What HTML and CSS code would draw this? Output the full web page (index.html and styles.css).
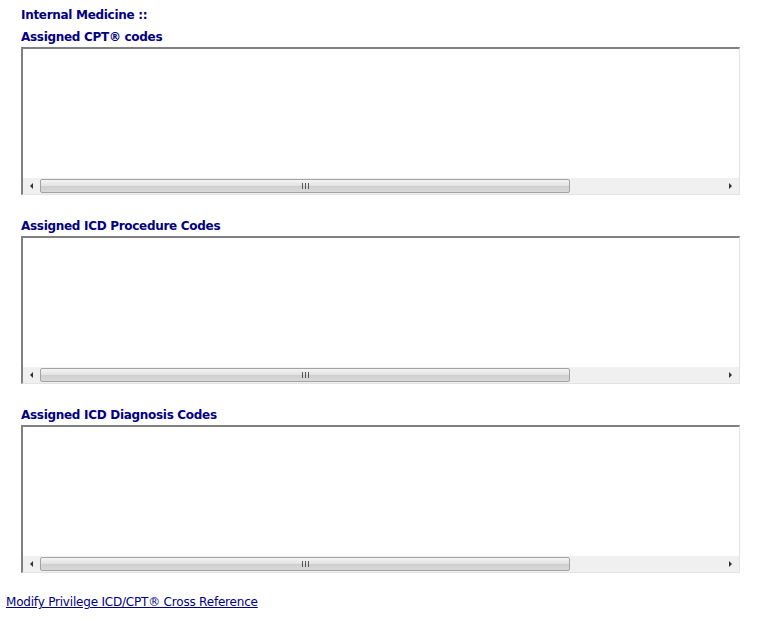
FILE: index.html
```html
<!DOCTYPE html>
<html lang="en">
<head>
  <meta charset="UTF-8" />
  <title>Privilege Codes</title>
  <link rel="stylesheet" href="styles.css">
</head>
<body>

  <div class="panel">
    <div class="specialty">Internal Medicine ::</div>

    <div class="section">
      <h2>Assigned CPT&reg; codes</h2>
      <div class="listbox">
        <div class="items"></div>
        <div class="hscroll">
          <span class="arrow left"></span>
          <div class="track"><div class="thumb"><span class="grip"></span></div></div>
          <span class="arrow right"></span>
        </div>
      </div>
    </div>

    <div class="section">
      <h2>Assigned ICD Procedure Codes</h2>
      <div class="listbox">
        <div class="items"></div>
        <div class="hscroll">
          <span class="arrow left"></span>
          <div class="track"><div class="thumb"><span class="grip"></span></div></div>
          <span class="arrow right"></span>
        </div>
      </div>
    </div>

    <div class="section">
      <h2>Assigned ICD Diagnosis Codes</h2>
      <div class="listbox">
        <div class="items"></div>
        <div class="hscroll">
          <span class="arrow left"></span>
          <div class="track"><div class="thumb"><span class="grip"></span></div></div>
          <span class="arrow right"></span>
        </div>
      </div>
    </div>
  </div>

  <a class="xref" href="#">Modify Privilege ICD/CPT&reg; Cross Reference</a>

</body>
</html>
```

FILE: styles.css
```css
* { box-sizing: border-box; margin: 0; padding: 0; }

body {
  font-family: "DejaVu Sans", Verdana, sans-serif;
  font-size: 12px;
  background: #fff;
  color: #000;
  padding: 7px 0 0 6px;
}

.panel {
  padding-left: 15px;
  width: 740px;
}

.specialty,
.section h2 {
  font-size: 12px;
  font-weight: bold;
  line-height: 16px;
  color: #000080;
  letter-spacing: -0.3px;
}

.section h2 {
  padding-top: 1px;
  margin-top: 5px;
  margin-bottom: 2px;
}

.section + .section h2 {
  margin-top: 22px;
}

.listbox {
  width: 719px;
  height: 148px;
  display: flex;
  flex-direction: column;
  border-top: 2px solid #808080;
  border-left: 2px solid #808080;
  border-right: 1px solid #e3e3e3;
  border-bottom: 1px solid #e3e3e3;
  background: #fff;
}

.items {
  flex: 1;
}

.hscroll {
  height: 16px;
  display: flex;
  align-items: center;
  background: #f0f0f0;
}

.arrow {
  width: 17px;
  height: 16px;
  display: flex;
  align-items: center;
  justify-content: center;
}

.arrow::before {
  content: "";
  border-top: 3px solid transparent;
  border-bottom: 3px solid transparent;
}

.arrow.left::before { border-right: 3px solid #333; }
.arrow.right::before { border-left: 3px solid #333; }

.track {
  flex: 1;
  height: 16px;
  padding: 1px 0;
}

.thumb {
  width: 530px;
  height: 14px;
  border: 1px solid #a3a3a3;
  border-radius: 2px;
  background: linear-gradient(#f4f4f4, #e2e2e2 50%, #cfcfcf 51%, #d9d9d9);
  display: flex;
  align-items: center;
  justify-content: center;
}

.grip {
  width: 7px;
  height: 6px;
  background: repeating-linear-gradient(90deg, #555 0 1px, transparent 1px 3px);
}

.xref {
  display: block;
  margin-top: 21px;
  font-size: 12px;
  line-height: 16px;
  color: #000080;
  letter-spacing: -0.2px;
}
```
